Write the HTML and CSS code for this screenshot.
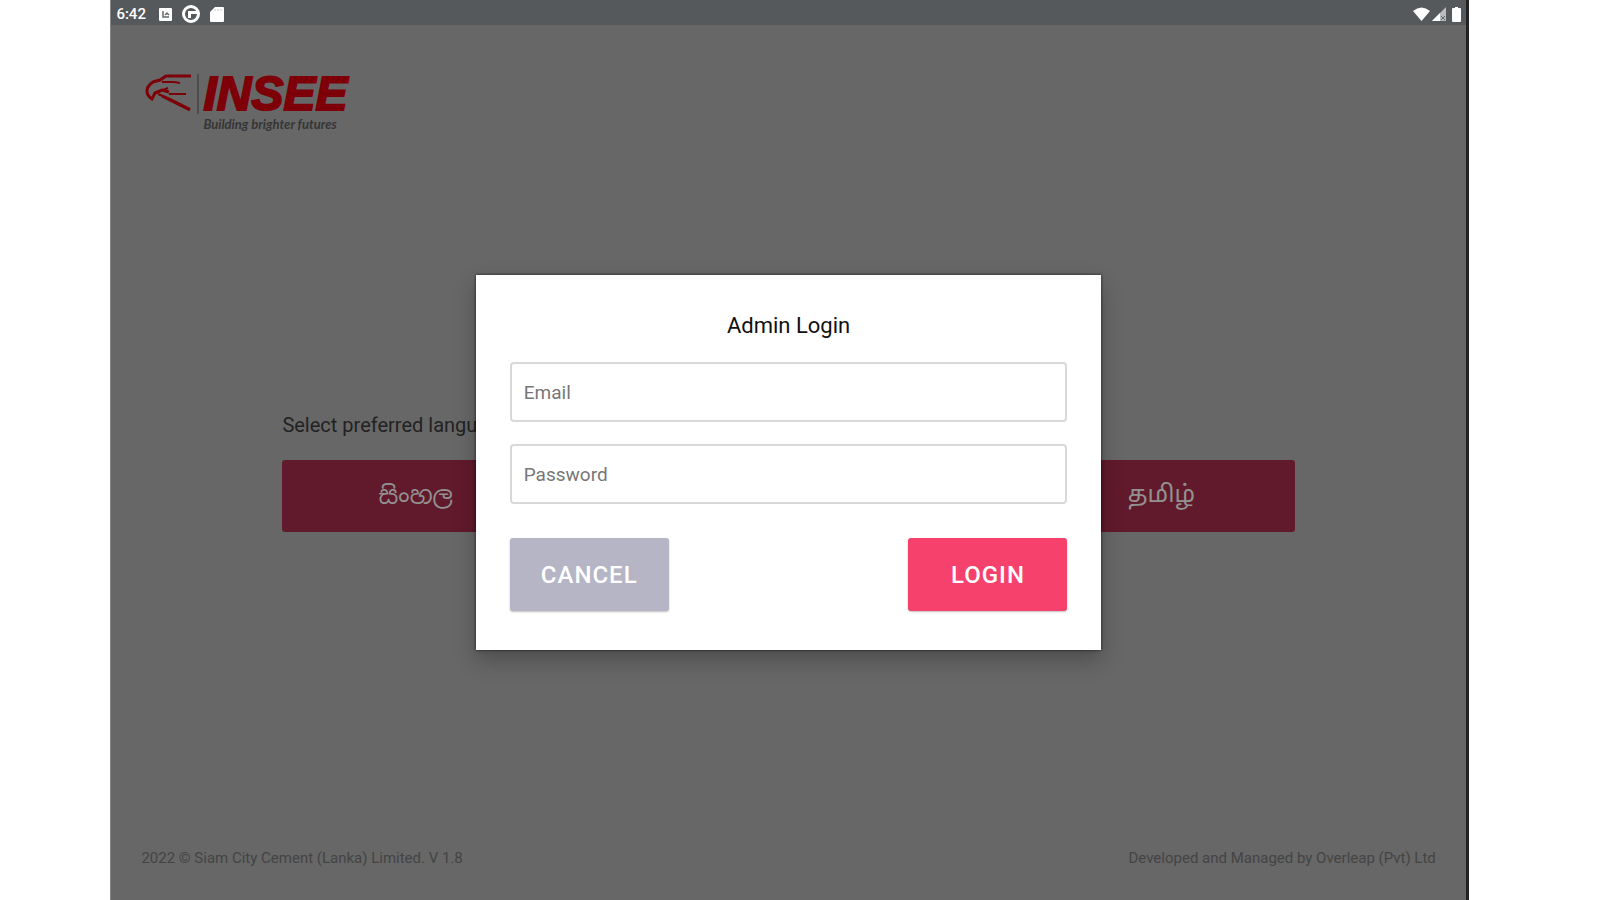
FILE: index.html
```html
<!DOCTYPE html>
<html lang="en">
<head>
    <meta charset="UTF-8">
    <meta name="viewport" content="width=device-width, initial-scale=1.0">
    <title>INSEE - Admin Login</title>
    <link rel="stylesheet" href="styles.css">
</head>
<body>
    <div class="screen">
        <div class="status-bar">
            <span class="time">6:42</span>
            <svg width="13" height="13" viewBox="0 0 13 13">
                <rect width="13" height="13" rx="1" fill="#fff"/>
                <path d="M4 3v6h6M6 7l2-2 2 2" fill="none" stroke="#666a6d" stroke-width="1.5"/>
            </svg>
            <svg width="18" height="18" viewBox="0 0 18 18">
                <circle cx="9" cy="9" r="7.5" fill="none" stroke="#fff" stroke-width="3"/>
                <path d="M6 6h9v3h-5v4H6z" fill="#fff"/>
                <path d="M9 9h5v2l-3 3H9z" fill="#55595c"/>
            </svg>
            <svg width="14" height="15" viewBox="0 0 14 15">
                <path d="M5 0h8q1 0 1 1v13q0 1-1 1H1q-1 0-1-1V5z" fill="#fff"/>
                <path d="M5 2v2M8 2v2M11 2v2" stroke="#c4c6c7"/>
            </svg>
            <div class="status-right">
                <svg width="17" height="14" viewBox="0 0 17 14">
                    <path d="M0 4Q8.500-3 17 4L8.500 14z" fill="#fff"/>
                </svg>
                <svg width="14" height="14" viewBox="0 0 14 14">
                    <path d="M14 0v14H0z" fill="#b9bbbc"/>
                    <path d="M8 6v8H0z" fill="#fff"/>
                    <path d="M9 9l4 4M13 9l-4 4" stroke="#63676a"/>
                </svg>
                <svg width="9" height="15" viewBox="0 0 9 15">
                    <path d="M3 0h3v1h2q1 0 1 1v12q0 1-1 1H1q-1 0-1-1V2q0-1 1-1h2z" fill="#fff"/>
                </svg>
            </div>
        </div>

        <main class="page">
            <header class="logo">
                <svg width="48" height="38" viewBox="0 0 48 38">
                    <g fill="none" stroke="#7d0009" stroke-width="3">
                        <path d="M46 2H21L15 6L8 8Q2 12 2 17Q2 22 7 25L10 19L17 16L24 18"/>
                        <path d="M17 8h12l6 1M13 20l12 5 20 10M24 20h17M18 16l5-2" stroke-width="2"/>
                        <path d="M17 22l28 14"/>
                    </g>
                </svg>
                <div class="logo-line"></div>
                <div class="logo-name">INSEE</div>
                <div class="tagline">Building brighter futures</div>
            </header>

            <section class="languages">
                <p>Select preferred language</p>
                <div class="language-list">
                    <button class="language-btn" lang="si">සිංහල</button>
                    <button class="language-btn">English</button>
                    <button class="language-btn" lang="ta">தமிழ்</button>
                </div>
            </section>

            <footer>
                <span>2022 © Siam City Cement (Lanka) Limited. V 1.8</span>
                <span>Developed and Managed by Overleap (Pvt) Ltd</span>
            </footer>
        </main>

        <form class="login-box">
            <h1>Admin Login</h1>
            <input type="email" id="email" placeholder="Email" aria-label="Email">
            <input type="password" id="password" placeholder="Password" aria-label="Password">
            <div class="actions">
                <button type="button" class="btn cancel-btn">CANCEL</button>
                <button type="submit" class="btn login-btn">LOGIN</button>
            </div>
        </form>
    </div>
</body>
</html>
```
FILE: styles.css
```css
* {
    box-sizing: border-box;
}
body {
    margin: 0;
    padding: 0 8.2% 0 6.9%;
    background-color: #fff;
    font-family: Roboto, "Noto Sans", sans-serif;
}
.screen {
    display: grid;
    grid-template-rows: 25px 1fr;
    grid-template-columns: 1fr;
    min-height: 100vh;
    background-color: #676767;
    border-left: 1px solid #858585;
    border-right: 3px solid #222;
}

/* status bar */
.status-bar {
    display: flex;
    align-items: center;
    gap: 10px;
    padding: 3px 5px 0;
    background-color: #55595c;
}
.time {
    margin-right: 3px;
    color: #fff;
    font-size: 15px;
    font-weight: 500;
}
.status-right {
    display: flex;
    align-items: center;
    gap: 2px;
    margin-left: auto;
}
.status-right svg:last-child {
    margin-left: 4px;
}

/* page behind the dialog */
.page {
    grid-area: 2 / 1;
    display: grid;
    grid-template-rows: auto 1fr auto;
    padding: 49px 30px 32px;
}
.logo {
    display: grid;
    grid-template-columns: 48px 2px auto;
    justify-content: start;
    column-gap: 4px;
    padding-left: 4px;
}
.logo-line {
    background-color: #4c4c4c;
}
.logo-name {
    color: #7d0009;
    font: italic bold 48px/40px "Liberation Sans", Arial, sans-serif;
    -webkit-text-stroke: 2px #7d0009;
}
.tagline {
    grid-column: 3;
    color: #353535;
    font: italic bold 13px/20px Lato, sans-serif;
}
.languages {
    align-self: center;
    padding: 0 141px 38px;
}
.languages p {
    margin: 0 0 23px;
    color: #222;
    font-size: 20px;
    line-height: 24px;
}
.language-list {
    display: grid;
    grid-template-columns: repeat(3, 1fr);
    gap: 106px;
}
.language-btn {
    height: 72px;
    border: 0;
    border-radius: 3px;
    background-color: #611a2b;
    color: #929292;
    font-family: Roboto, "Noto Sans Sinhala", "Noto Sans Tamil", "Noto Sans", sans-serif;
    font-size: 24px;
}
footer {
    display: flex;
    justify-content: space-between;
    color: #444;
    font-size: 15px;
    line-height: 20px;
}

/* dialog */
.login-box {
    grid-area: 2 / 1;
    place-self: center;
    z-index: 1;
    display: flex;
    flex-direction: column;
    gap: 22px;
    width: 46.2%;
    padding: 37px 34px 39px;
    background-color: #fff;
    box-shadow: 0 0 3px rgba(0, 0, 0, .7), 0 10px 20px rgba(0, 0, 0, .25);
}
.login-box h1 {
    margin: 0;
    color: #111;
    font-size: 22px;
    font-weight: 400;
    line-height: 28px;
    text-align: center;
}
.login-box input {
    height: 60px;
    padding: 0 12px;
    border: 2px solid #d8d8d8;
    border-radius: 4px;
    background-color: #fff;
    font-family: inherit;
    font-size: 19px;
}
.login-box input::placeholder {
    color: #777;
}
.actions {
    display: flex;
    justify-content: space-between;
    padding-top: 12px;
}
.btn {
    width: 159px;
    height: 73px;
    border: 0;
    border-radius: 3px;
    color: #fff;
    font-family: inherit;
    font-size: 24px;
    font-weight: 500;
    letter-spacing: 1px;
    box-shadow: 0 1px 2px rgba(0, 0, 0, .25);
}
.cancel-btn {
    background-color: #b5b5c6;
}
.login-btn {
    background-color: #f5416c;
}
```
